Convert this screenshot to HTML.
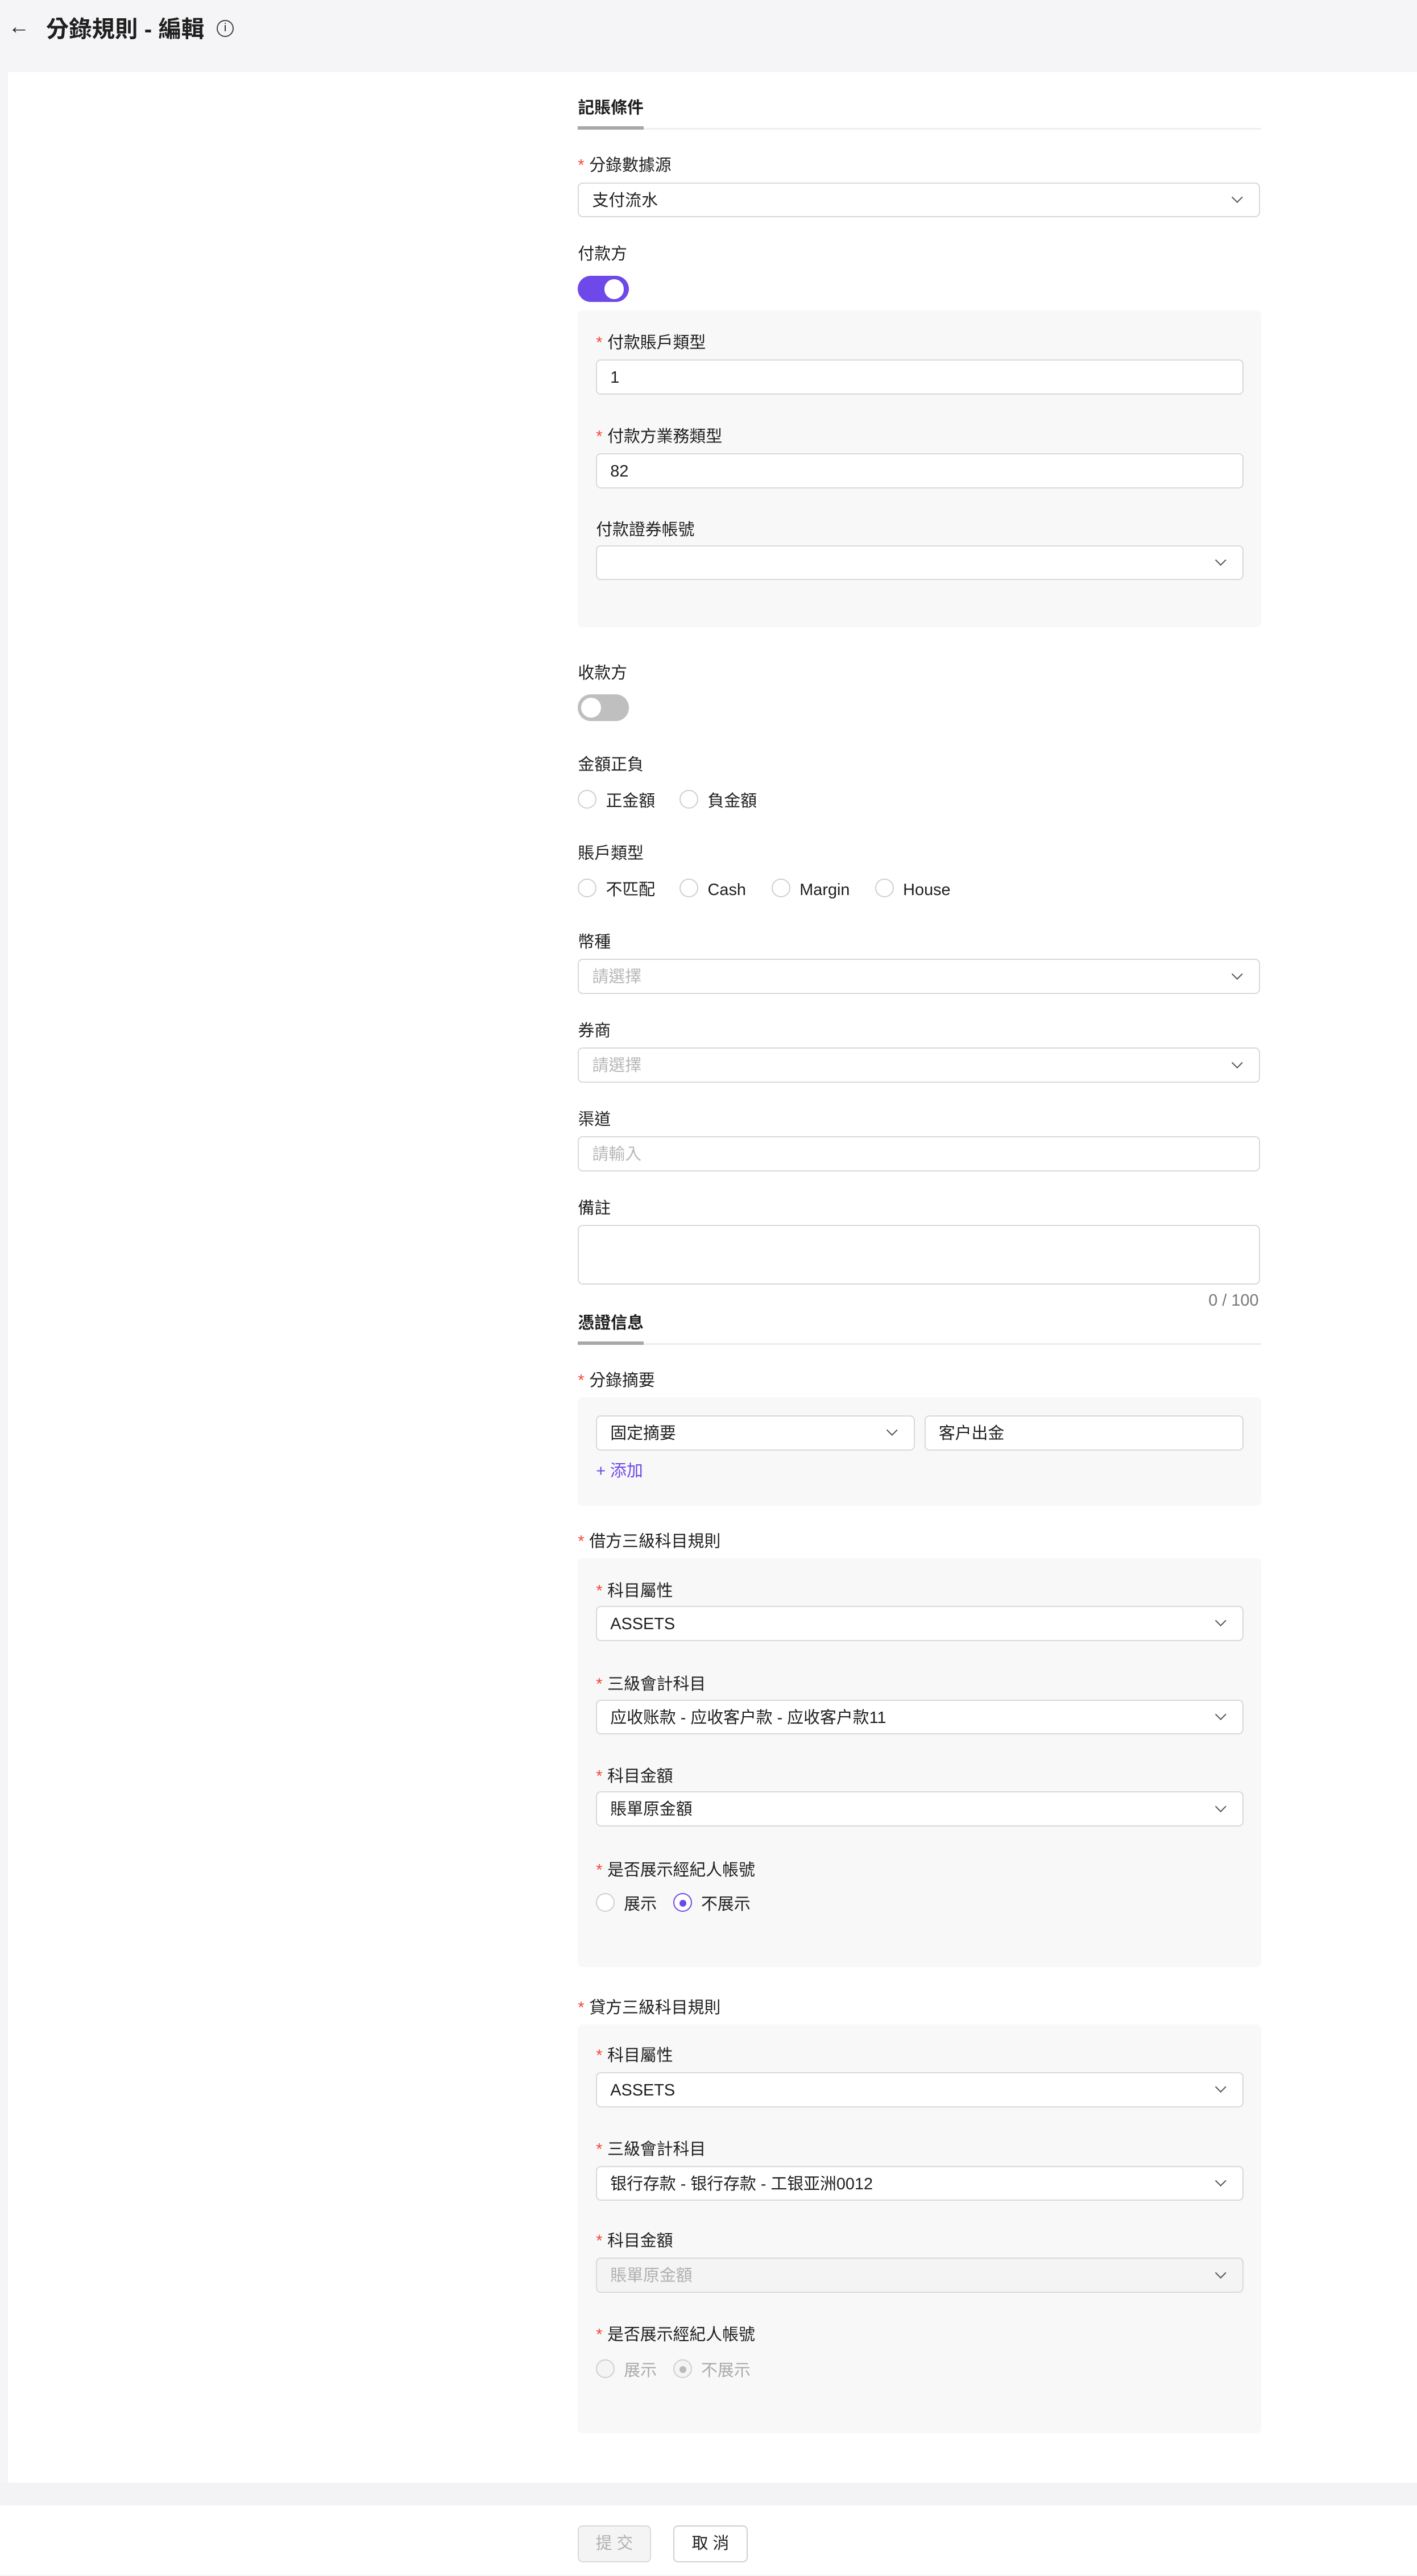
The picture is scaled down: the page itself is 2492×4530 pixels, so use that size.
<!DOCTYPE html>
<html><head><meta charset="utf-8">
<style>
html,body{margin:0;padding:0;}
body{width:863px;height:1568px;zoom:2.8876;position:relative;background:#f5f5f7;font-family:"Liberation Sans","Noto Sans CJK TC",sans-serif;color:#1f1f1f;overflow:hidden;font-size:10px;}
.a{position:absolute;}
.card{left:5px;top:44px;width:858px;height:1468px;background:#fff;}
.foot{left:0;top:1526px;width:863px;height:42px;background:#fff;}
.lbl{position:absolute;font-size:10px;line-height:12px;white-space:nowrap;margin-top:1px;}
.req::before{content:"*";color:#f5483b;margin-right:3px;}
.box{position:absolute;height:20px;border:1px solid #d9d9d9;border-radius:3px;background:#fff;box-sizing:content-box;font-size:10px;line-height:21px;padding-left:8px;}
.ph{color:#b8b8b8;}
.dis{background:#f4f4f4;color:#b0b0b0;}
.chev::after{content:"";position:absolute;right:11px;top:6px;width:4px;height:4px;border-right:1px solid #555;border-bottom:1px solid #555;transform:rotate(45deg);}
.panel{position:absolute;left:352px;width:416px;background:#f8f8f8;border-radius:3px;}
.radio{position:absolute;width:10px;height:10px;border:1px solid #cfcfcf;border-radius:50%;background:#fff;}
.rt{position:absolute;font-size:10px;line-height:12px;margin-top:1px;}
</style></head><body>
<div class="a" style="left:5px;top:8px;font-size:13px;line-height:16px;">&#8592;</div>
<div class="a" style="left:28px;top:9px;font-size:14px;font-weight:bold;line-height:18px;">分錄規則 - 編輯</div>
<div class="a" style="left:132px;top:12px;width:9px;height:9px;border:1px solid #444;border-radius:50%;font-size:7px;line-height:9px;text-align:center;">i</div>

<div class="a card"></div>
<div class="a" style="left:0;top:1512px;width:863px;height:14px;background:#f3f3f5;"></div>
<div class="a foot"></div>

<div class="lbl" style="left:352px;top:59px;font-weight:bold;">記賬條件</div>
<div class="a" style="left:352px;top:78px;width:416px;height:1px;background:#eee;"></div>
<div class="a" style="left:352px;top:77px;width:40px;height:2px;background:#a8a8a8;"></div>

<div class="lbl req" style="left:352px;top:94px;">分錄數據源</div>
<div class="box chev" style="left:352px;top:111px;width:406px;">支付流水</div>

<div class="lbl" style="left:352px;top:148px;">付款方</div>
<div class="a" style="left:352px;top:168px;width:31px;height:16px;border-radius:8px;background:#6e48e8;"></div>
<div class="a" style="left:368px;top:170px;width:12px;height:12px;border-radius:50%;background:#fff;"></div>

<div class="panel" style="top:189px;height:193px;"></div>
<div class="lbl req" style="left:363px;top:202px;">付款賬戶類型</div>
<div class="box" style="left:363px;top:219px;width:385px;">1</div>
<div class="lbl req" style="left:363px;top:259px;">付款方業務類型</div>
<div class="box" style="left:363px;top:276px;width:385px;">82</div>
<div class="lbl" style="left:363px;top:316px;">付款證券帳號</div>
<div class="box chev" style="left:363px;top:332px;width:385px;"></div>

<div class="lbl" style="left:352px;top:403px;">收款方</div>
<div class="a" style="left:352px;top:423px;width:31px;height:16px;border-radius:8px;background:#bfbfbf;"></div>
<div class="a" style="left:354px;top:425px;width:12px;height:12px;border-radius:50%;background:#fff;"></div>

<div class="lbl" style="left:352px;top:459px;">金額正負</div>
<div class="radio" style="left:352px;top:481px;"></div><div class="rt" style="left:369px;top:481px;">正金額</div>
<div class="radio" style="left:414px;top:481px;"></div><div class="rt" style="left:431px;top:481px;">負金額</div>

<div class="lbl" style="left:352px;top:513px;">賬戶類型</div>
<div class="radio" style="left:352px;top:535px;"></div><div class="rt" style="left:369px;top:535px;">不匹配</div>
<div class="radio" style="left:414px;top:535px;"></div><div class="rt" style="left:431px;top:535px;">Cash</div>
<div class="radio" style="left:470px;top:535px;"></div><div class="rt" style="left:487px;top:535px;">Margin</div>
<div class="radio" style="left:533px;top:535px;"></div><div class="rt" style="left:550px;top:535px;">House</div>

<div class="lbl" style="left:352px;top:567px;">幣種</div>
<div class="box chev ph" style="left:352px;top:584px;width:406px;">請選擇</div>
<div class="lbl" style="left:352px;top:621px;">券商</div>
<div class="box chev ph" style="left:352px;top:638px;width:406px;">請選擇</div>
<div class="lbl" style="left:352px;top:675px;">渠道</div>
<div class="box ph" style="left:352px;top:692px;width:406px;">請輸入</div>
<div class="lbl" style="left:352px;top:729px;">備註</div>
<div class="box" style="left:352px;top:746px;width:406px;height:35px;"></div>
<div class="lbl" style="left:736px;top:785px;color:#777;">0 / 100</div>

<div class="lbl" style="left:352px;top:799px;font-weight:bold;">憑證信息</div>
<div class="a" style="left:352px;top:818px;width:416px;height:1px;background:#eee;"></div>
<div class="a" style="left:352px;top:817px;width:40px;height:2px;background:#a8a8a8;"></div>

<div class="lbl req" style="left:352px;top:834px;">分錄摘要</div>
<div class="panel" style="top:851px;height:66px;"></div>
<div class="box chev" style="left:363px;top:862px;width:185px;">固定摘要</div>
<div class="box" style="left:563px;top:862px;width:185px;">客户出金</div>
<div class="lbl" style="left:363px;top:889px;color:#6e48e8;">+ 添加</div>

<div class="lbl req" style="left:352px;top:932px;">借方三級科目規則</div>
<div class="panel" style="top:949px;height:249px;"></div>
<div class="lbl req" style="left:363px;top:962px;">科目屬性</div>
<div class="box chev" style="left:363px;top:978px;width:385px;">ASSETS</div>
<div class="lbl req" style="left:363px;top:1019px;">三級會計科目</div>
<div class="box chev" style="left:363px;top:1035px;width:385px;">应收账款 - 应收客户款 - 应收客户款11</div>
<div class="lbl req" style="left:363px;top:1075px;">科目金額</div>
<div class="box chev" style="left:363px;top:1091px;width:385px;">賬單原金額</div>
<div class="lbl req" style="left:363px;top:1132px;">是否展示經紀人帳號</div>
<div class="radio" style="left:363px;top:1153px;"></div><div class="rt" style="left:380px;top:1153px;">展示</div>
<div class="radio" style="left:410px;top:1153px;border-color:#6e48e8;"></div><div class="a" style="left:414px;top:1157px;width:4px;height:4px;border-radius:50%;background:#6e48e8;"></div><div class="rt" style="left:427px;top:1153px;">不展示</div>

<div class="lbl req" style="left:352px;top:1216px;">貸方三級科目規則</div>
<div class="panel" style="top:1233px;height:249px;"></div>
<div class="lbl req" style="left:363px;top:1245px;">科目屬性</div>
<div class="box chev" style="left:363px;top:1262px;width:385px;">ASSETS</div>
<div class="lbl req" style="left:363px;top:1302px;">三級會計科目</div>
<div class="box chev" style="left:363px;top:1319px;width:385px;">银行存款 - 银行存款 - 工银亚洲0012</div>
<div class="lbl req" style="left:363px;top:1358px;">科目金額</div>
<div class="box chev dis" style="left:363px;top:1375px;width:385px;">賬單原金額</div>
<div class="lbl req" style="left:363px;top:1415px;">是否展示經紀人帳號</div>
<div class="radio" style="left:363px;top:1437px;background:#f4f4f4;"></div><div class="rt" style="left:380px;top:1437px;color:#aaa;">展示</div>
<div class="radio" style="left:410px;top:1437px;background:#f4f4f4;"></div><div class="a" style="left:414px;top:1441px;width:4px;height:4px;border-radius:50%;background:#bbb;"></div><div class="rt" style="left:427px;top:1437px;color:#aaa;">不展示</div>

<div class="a" style="left:352px;top:1538px;width:43px;height:21px;border:1px solid #d9d9d9;border-radius:3px;background:#f4f4f4;color:#b0b0b0;text-align:center;line-height:21px;">提 交</div>
<div class="a" style="left:410px;top:1538px;width:44px;height:21px;border:1px solid #d0d0d0;border-radius:3px;background:#fff;text-align:center;line-height:21px;">取 消</div>
</body></html>
